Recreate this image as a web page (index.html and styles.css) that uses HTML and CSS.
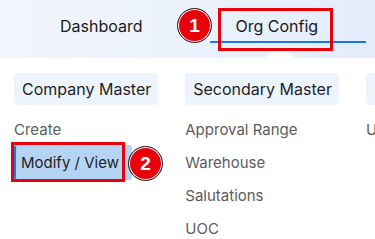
FILE: index.html
```html
<!DOCTYPE html>
<html>
<head>
<meta charset="utf-8">
<link rel="stylesheet" href="styles.css">
</head>
<body>
<div class="page">
  <header class="topbar">
    <nav class="tabs">
      <span class="tab">Dashboard</span>
      <span class="tab active">Org Config</span>
    </nav>
    <span class="notch"></span>
  </header>
  <main class="menu">
    <section class="col">
      <div class="col-head">Company Master</div>
      <ul class="items">
        <li class="item">Create</li>
        <li class="item"><span class="selected">Modify / View</span></li>
      </ul>
    </section>
    <section class="col">
      <div class="col-head">Secondary Master</div>
      <ul class="items">
        <li class="item">Approval Range</li>
        <li class="item">Warehouse</li>
        <li class="item">Salutations</li>
        <li class="item">UOC</li>
      </ul>
    </section>
    <section class="col">
      <div class="col-head">User Master</div>
      <ul class="items">
        <li class="item">Users</li>
      </ul>
    </section>
  </main>
  <div class="mark mark-1"></div>
  <div class="badge badge-1">1</div>
  <div class="mark mark-2"></div>
  <div class="badge badge-2">2</div>
</div>
</body>
</html>
```

FILE: styles.css
```css
html, body {
  margin: 0;
  padding: 0;
  background: #ffffff;
  overflow: hidden;
}
body {
  font-family: Inter, "Liberation Sans", sans-serif;
  color: #1f1f1f;
}
.page {
  position: relative;
  width: 375px;
  height: 239px;
  overflow: hidden;
}
.topbar {
  position: relative;
  height: 58px;
  background: linear-gradient(90deg, #f3f6fb 0%, #e9f1fc 60%, #e3edfb 100%);
}
.tabs {
  display: flex;
  align-items: flex-start;
  padding-left: 60px;
  padding-top: 16px;
  gap: 67px;
}
.tab {
  font-size: 16px;
  line-height: 20px;
  color: #1a1a1a;
  white-space: nowrap;
}
.tab.active {
  width: 130px;
  padding-left: 26px;
  padding-bottom: 5px;
  border-bottom: 2px solid #1677f2;
}
.notch {
  position: absolute;
  left: 264px;
  bottom: 0;
  width: 0;
  height: 0;
  border-left: 16px solid transparent;
  border-right: 16px solid transparent;
  border-bottom: 11px solid #ffffff;
}
.menu {
  display: flex;
  gap: 27px;
  padding: 15px 0 0 14px;
}
.col {
  flex: none;
}
.col-head {
  height: 32px;
  line-height: 32px;
  padding: 0 7px 0 8px;
  background: #edf4fe;
  border-radius: 4px;
  font-size: 16px;
  color: #1f1f1f;
  white-space: nowrap;
}
.items {
  list-style: none;
  margin: 8px 0 0 0;
  padding: 0;
}
.item {
  height: 33px;
  line-height: 33px;
  font-size: 15px;
  color: #5c5c5c;
  white-space: nowrap;
}
.selected {
  display: inline-block;
  height: 35px;
  line-height: 35px;
  margin-top: -1px;
  padding: 0 13px 0 5px;
  background: #b5d4f4;
  border-left: 2px solid #1677f2;
  border-radius: 3px;
  color: #1f1f1f;
}
.mark {
  position: absolute;
  border: 3px solid #e8000a;
  box-sizing: border-box;
}
.mark-1 {
  left: 218px;
  top: 8px;
  width: 115px;
  height: 43px;
}
.mark-2 {
  left: 11px;
  top: 142px;
  width: 114px;
  height: 40px;
}
.badge {
  position: absolute;
  width: 35px;
  height: 35px;
  box-sizing: border-box;
  border-radius: 50%;
  background: #e8000a;
  border: 1px solid #2a2a2a;
  box-shadow: inset 0 0 0 1px #ffffff;
  color: #ffffff;
  font-family: "Liberation Sans", Arial, sans-serif;
  font-weight: bold;
  font-size: 19px;
  line-height: 33px;
  text-align: center;
}
.badge-1 {
  left: 177px;
  top: 8px;
}
.badge-2 {
  left: 128px;
  top: 146px;
}
```
